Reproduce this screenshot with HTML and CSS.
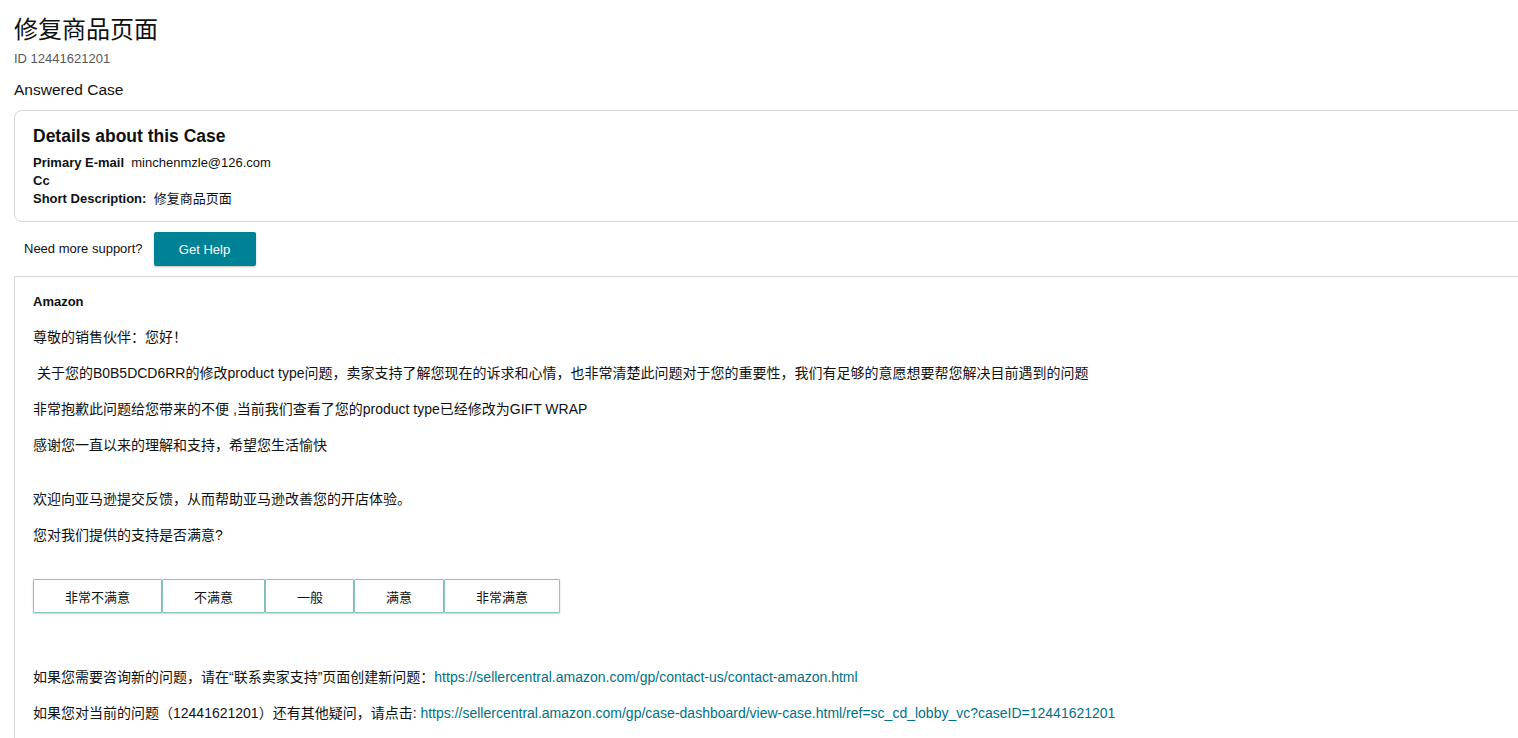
FILE: index.html
```html
<!DOCTYPE html>
<html lang="zh">
<head>
<meta charset="utf-8">
<title>修复商品页面</title>
<link rel="stylesheet" href="styles.css">
</head>
<body>
<div class="page">
  <h1 class="title">修复商品页面</h1>
  <div class="case-id">ID 12441621201</div>
  <div class="status">Answered Case</div>

  <section class="details">
    <h2 class="details-title">Details about this Case</h2>
    <div class="row"><b>Primary E-mail</b>&nbsp; minchenmzle@126.com</div>
    <div class="row"><b>Cc</b></div>
    <div class="row"><b>Short Description:</b>&nbsp; 修复商品页面</div>
  </section>

  <div class="support">
    <span class="support-text">Need more support?</span>
    <button class="help-btn">Get Help</button>
  </div>

  <section class="message">
    <p class="sender">Amazon</p>
    <p>尊敬的销售伙伴：您好！</p>
    <p>&nbsp;关于您的B0B5DCD6RR的修改product type问题，卖家支持了解您现在的诉求和心情，也非常清楚此问题对于您的重要性，我们有足够的意愿想要帮您解决目前遇到的问题</p>
    <p>非常抱歉此问题给您带来的不便 ,当前我们查看了您的product type已经修改为GIFT WRAP</p>
    <p class="gap-after">感谢您一直以来的理解和支持，希望您生活愉快</p>
    <p>欢迎向亚马逊提交反馈，从而帮助亚马逊改善您的开店体验。</p>
    <p class="gap-after">您对我们提供的支持是否满意?</p>
    <div class="rating">
      <button class="rate">非常不满意</button>
      <button class="rate">不满意</button>
      <button class="rate rate-narrow">一般</button>
      <button class="rate">满意</button>
      <button class="rate">非常满意</button>
    </div>
    <p>如果您需要咨询新的问题，请在“联系卖家支持”页面创建新问题：<a href="#">https://sellercentral.amazon.com/gp/contact-us/contact-amazon.html</a></p>
    <p>如果您对当前的问题（12441621201）还有其他疑问，请点击: <a href="#">https://sellercentral.amazon.com/gp/case-dashboard/view-case.html/ref=sc_cd_lobby_vc?caseID=12441621201</a></p>
  </section>
</div>
</body>
</html>
```

FILE: styles.css
```css
html, body {
  margin: 0;
  padding: 0;
  background: #ffffff;
}

body {
  font-family: "Liberation Sans", Arial, "Noto Sans CJK SC", sans-serif;
  color: #0f1111;
  font-size: 13px;
  line-height: 18px;
  overflow: hidden;
}

.page {
  padding: 14px 0 0 14px;
  width: 1530px;
}

.title {
  margin: 0;
  font-size: 24px;
  line-height: 32px;
  font-weight: 400;
}

.case-id {
  margin-top: 4px;
  color: #565959;
  font-size: 13px;
  line-height: 18px;
}

.status {
  margin-top: 11px;
  font-size: 15.5px;
  line-height: 22px;
}

.details {
  margin-top: 9px;
  border: 1px solid #d5d9d9;
  border-radius: 8px;
  padding: 13px 18px 13px 18px;
}

.details-title {
  margin: 0 0 6px;
  font-size: 17.5px;
  line-height: 24px;
  font-weight: 700;
}

.row {
  font-size: 13px;
  line-height: 18px;
}

.row b {
  font-weight: 700;
}

.support {
  margin-top: 10px;
  padding-left: 10px;
  display: flex;
  align-items: center;
  gap: 11px;
}

.support-text {
  font-size: 13px;
}

.help-btn {
  width: 102px;
  height: 34px;
  border: none;
  border-radius: 2px;
  background: #008296;
  color: #ffffff;
  font-family: inherit;
  font-size: 13px;
  box-shadow: 0 1px 2px rgba(0, 0, 0, 0.25);
  padding: 0;
}

.message {
  margin-top: 10px;
  border-top: 1px solid #d5d9d9;
  border-left: 1px solid #d5d9d9;
  padding: 16px 0 20px 18px;
}

.message p {
  margin: 0 0 18px;
  font-size: 14px;
  line-height: 18px;
}

.message .sender {
  font-weight: 700;
  font-size: 13px;
  margin-bottom: 17px;
}

.message .gap-after {
  margin-bottom: 36px;
}

.rating {
  display: flex;
  gap: 0;
  margin-top: -1px;
  margin-bottom: 55px;
}

.rate {
  height: 34px;
  padding: 0 31px;
  border: 1px solid #89c4c1;
  border-radius: 1px;
  background: #ffffff;
  color: #0f1111;
  font-family: inherit;
  font-size: 13px;
  box-shadow: 0 1px 2px rgba(0, 0, 0, 0.2);
}

.rate-narrow {
  padding: 0 30px 0 31px;
}

a {
  color: #007185;
  text-decoration: none;
}
```
